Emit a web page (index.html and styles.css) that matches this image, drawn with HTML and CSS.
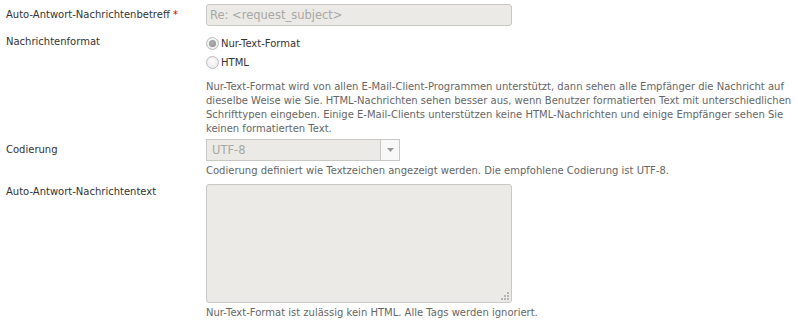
FILE: index.html
```
<!DOCTYPE html>
<html lang="de">
<head>
<meta charset="utf-8">
<link rel="stylesheet" href="styles.css">
</head>
<body>
<div class="form">
  <div class="row row-subject">
    <div class="label">Auto-Antwort-Nachrichtenbetreff <span class="req">*</span></div>
    <div class="field">
      <div class="input">Re: &lt;request_subject&gt;</div>
    </div>
  </div>
  <div class="row row-format">
    <div class="label">Nachrichtenformat</div>
    <div class="field">
      <div class="radio-line"><span class="radio checked"></span><span class="rtext">Nur-Text-Format</span></div>
      <div class="radio-line"><span class="radio"></span><span class="rtext">HTML</span></div>
      <p class="help help-format">Nur-Text-Format wird von allen E-Mail-Client-Programmen unterstützt, dann sehen alle Empfänger die Nachricht auf dieselbe Weise wie Sie. HTML-Nachrichten sehen besser aus, wenn Benutzer formatierten Text mit unterschiedlichen Schrifttypen eingeben. Einige E-Mail-Clients unterstützen keine HTML-Nachrichten und einige Empfänger sehen Sie keinen formatierten Text.</p>
    </div>
  </div>
  <div class="row row-enc">
    <div class="label">Codierung</div>
    <div class="field">
      <div class="select"><span class="sval">UTF-8</span><span class="sarrow"><svg width="7" height="4" viewBox="0 0 7 4"><path d="M0 0H7L3.5 4Z" fill="#9a9a9a"/></svg></span></div>
      <p class="help">Codierung definiert wie Textzeichen angezeigt werden. Die empfohlene Codierung ist UTF-8.</p>
    </div>
  </div>
  <div class="row row-body">
    <div class="label">Auto-Antwort-Nachrichtentext</div>
    <div class="field">
      <div class="textarea"><svg class="grip" width="9" height="9" viewBox="0 0 9 9"><g fill="#b4b4b0"><rect x="7" y="1" width="2" height="2"/><rect x="4" y="4" width="2" height="2"/><rect x="7" y="4" width="2" height="2"/><rect x="1" y="7" width="2" height="2"/><rect x="4" y="7" width="2" height="2"/><rect x="7" y="7" width="2" height="2"/></g></svg></div>
      <p class="help">Nur-Text-Format ist zulässig kein HTML. Alle Tags werden ignoriert.</p>
    </div>
  </div>
</div>
</body>
</html>
```
FILE: styles.css
```
html, body {
  margin: 0;
  padding: 0;
  background: #ffffff;
}
body {
  font-family: "DejaVu Sans", Tahoma, sans-serif;
  font-size: 10px;
  color: #333333;
}
.form {
  padding: 4px 0 0 6px;
}
.row {
  display: grid;
  grid-template-columns: 200px 1fr;
}
.label {
  color: #333333;
  line-height: 14px;
}
.req {
  color: #cc0000;
}
.row-subject .label {
  padding-top: 4px;
}
.input {
  box-sizing: border-box;
  width: 306px;
  height: 22px;
  border: 1px solid #c8c8c4;
  border-radius: 3px;
  background: #ebeae6;
  color: #a8a8a4;
  font-size: 11.5px;
  line-height: 20px;
  padding-left: 3px;
}
.row-format {
  margin-top: 8px;
}
.row-format .label {
  padding-top: 1px;
}
.radio-line {
  display: flex;
  align-items: center;
  height: 19px;
}
.radio {
  box-sizing: border-box;
  width: 13px;
  height: 13px;
  border-radius: 50%;
  border: 1px solid #bcbcbc;
  background: radial-gradient(circle at 50% 40%, #ffffff 0%, #ececec 70%, #dadada 100%);
  margin-right: 2px;
  position: relative;
}
.radio.checked::after {
  content: "";
  position: absolute;
  left: 2px;
  top: 2px;
  width: 7px;
  height: 7px;
  border-radius: 50%;
  background: radial-gradient(circle at 45% 40%, #b0b0b0 0%, #8a8a8a 100%);
}
.rtext {
  color: #333333;
}
.help {
  margin: 0;
  color: #666666;
  line-height: 14px;
}
.help-format {
  margin-top: 8px;
  width: 590px;
}
.row-enc {
  margin-top: 3px;
}
.row-enc .label {
  padding-top: 4px;
}
.select {
  box-sizing: border-box;
  width: 194px;
  height: 22px;
  border: 1px solid #c8c8c4;
  background: #ebeae6;
  display: flex;
  align-items: stretch;
}
.sval {
  flex: 1;
  color: #a8a8a4;
  font-size: 11.5px;
  line-height: 20px;
  padding-left: 5px;
}
.sarrow {
  width: 18px;
  border-left: 1px solid #c8c8c4;
  background: #f8f8f8;
  display: flex;
  align-items: center;
  justify-content: center;
}
.row-enc .help {
  margin-top: 3px;
}
.row-body {
  margin-top: 6px;
}
.row-body .label {
  padding-top: 1px;
}
.textarea {
  box-sizing: border-box;
  width: 306px;
  height: 119px;
  border: 1px solid #c8c8c4;
  border-radius: 3px;
  background: #ebeae6;
  position: relative;
}
.grip {
  position: absolute;
  right: 2px;
  bottom: 2px;
}
.row-body .help {
  margin-top: 3px;
}
```
